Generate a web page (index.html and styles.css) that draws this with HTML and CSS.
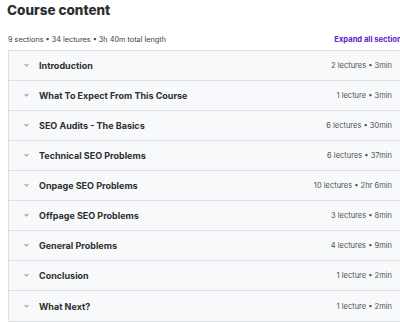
FILE: index.html
```html
<!DOCTYPE html>
<html>
  <head>
    <link rel="stylesheet" href="styles.css">
  </head>
  <body>
    <div class="course">
      <h2 class="title">Course content</h2>
      <div class="summary">
        <span>9 sections • 34 lectures • 3h 40m total length</span>
        <span class="expand">Expand all sections</span>
      </div>

      <!-- Sections -->
      <div class="sections">
        <div class="section">
          <span class="chevron"></span>
          <span class="section-title">Introduction</span>
          <span class="section-meta">2 lectures • 3min</span>
        </div>
        <div class="section">
          <span class="chevron"></span>
          <span class="section-title">What To Expect From This Course</span>
          <span class="section-meta">1 lecture • 3min</span>
        </div>
        <div class="section">
          <span class="chevron"></span>
          <span class="section-title">SEO Audits - The Basics</span>
          <span class="section-meta">6 lectures • 30min</span>
        </div>
        <div class="section">
          <span class="chevron"></span>
          <span class="section-title">Technical SEO Problems</span>
          <span class="section-meta">6 lectures • 37min</span>
        </div>
        <div class="section">
          <span class="chevron"></span>
          <span class="section-title">Onpage SEO Problems</span>
          <span class="section-meta">10 lectures • 2hr 6min</span>
        </div>
        <div class="section">
          <span class="chevron"></span>
          <span class="section-title">Offpage SEO Problems</span>
          <span class="section-meta">3 lectures • 8min</span>
        </div>
        <div class="section">
          <span class="chevron"></span>
          <span class="section-title">General Problems</span>
          <span class="section-meta">4 lectures • 9min</span>
        </div>
        <div class="section">
          <span class="chevron"></span>
          <span class="section-title">Conclusion</span>
          <span class="section-meta">1 lecture • 2min</span>
        </div>
        <div class="section">
          <span class="chevron"></span>
          <span class="section-title">What Next?</span>
          <span class="section-meta">1 lecture • 2min</span>
        </div>
      </div>
    </div>
  </body>
</html>
```

FILE: styles.css
```css
* {
  margin: 0;
  padding: 0;
  box-sizing: border-box;
}

body {
  background: #ffffff;
  font-family: Inter, "Noto Sans", sans-serif;
  color: #2d2f31;
  overflow: hidden;
}

.course {
  width: 402px;
  padding: 1px 0 0 8px;
}

.title {
  font-size: 13.5px;
  font-weight: 800;
  line-height: 18px;
  margin-left: -1px;
}

.summary {
  display: flex;
  justify-content: space-between;
  align-items: center;
  margin-top: 13px;
  height: 14px;
  font-size: 7.3px;
  color: #3e4143;
  white-space: nowrap;
}

.expand {
  color: #5624d0;
  font-weight: 700;
  font-size: 7.6px;
  margin-right: -4px;
}

.sections {
  margin-top: 4px;
  border: 1px solid #dcdfe3;
  border-right: none;
}

.section {
  display: flex;
  align-items: center;
  height: 30px;
  padding: 0 10px 0 16px;
  background: #f7f9fa;
  border-bottom: 1px solid #dcdfe3;
}

.section:last-child {
  border-bottom: none;
}

.chevron {
  width: 3px;
  height: 3px;
  border-right: 1px solid #8a8f93;
  border-bottom: 1px solid #8a8f93;
  transform: rotate(45deg);
  margin: -2px 11px 0 0;
}

.section-title {
  flex: 1;
  font-size: 9px;
  font-weight: 700;
}

.section-meta {
  font-size: 7.5px;
  color: #4d5255;
}
```
